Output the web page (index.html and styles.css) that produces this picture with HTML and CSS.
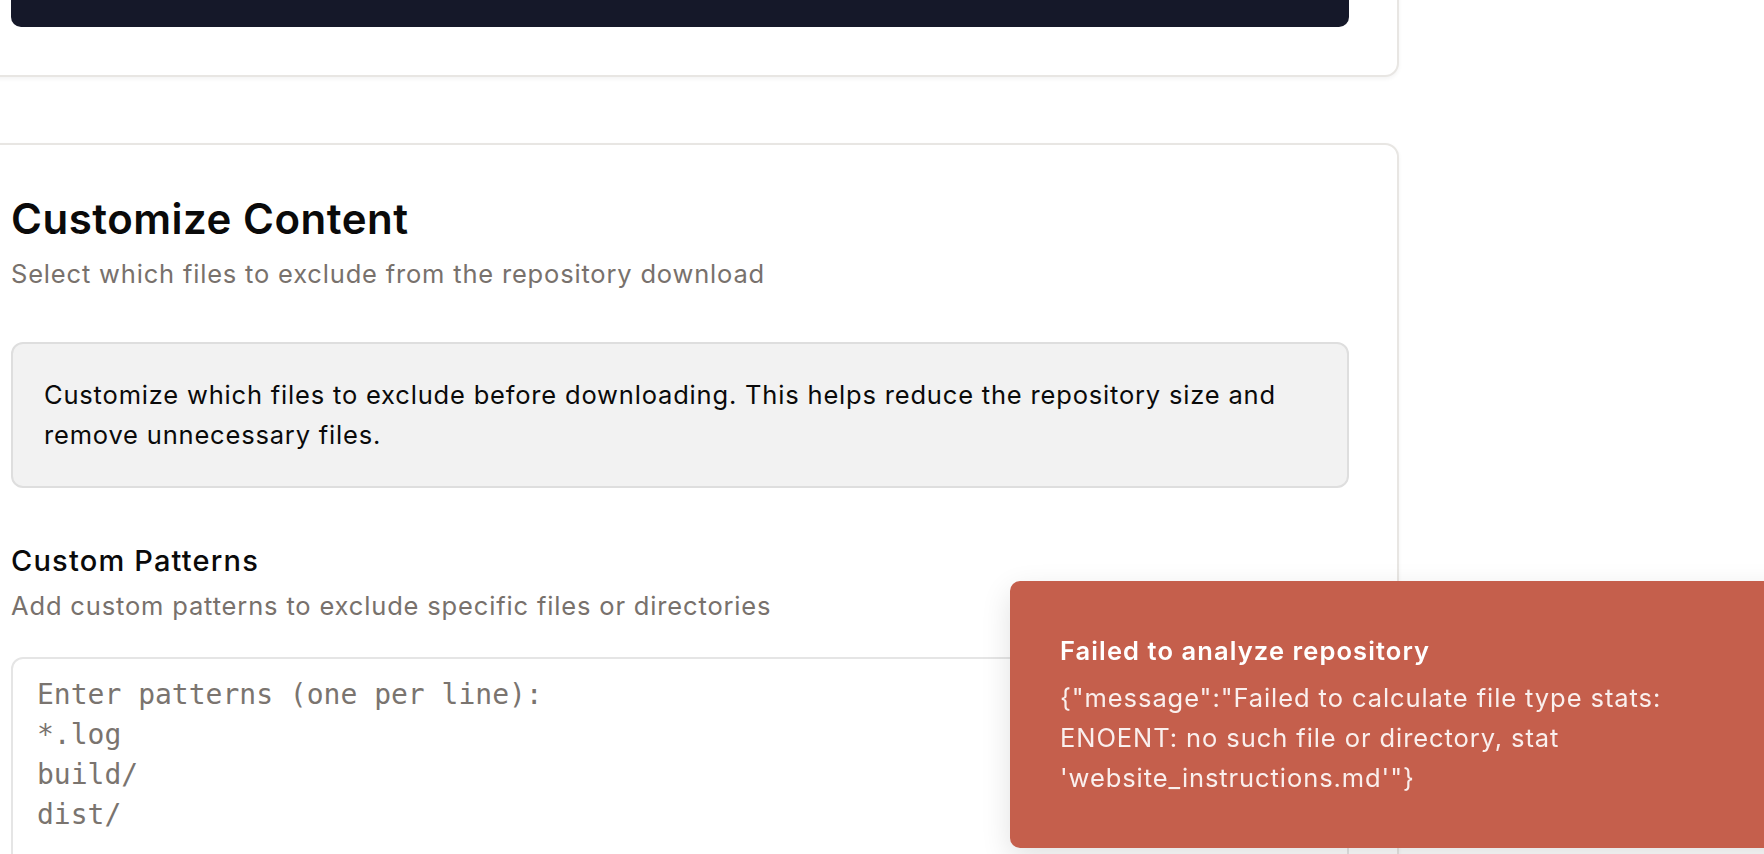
FILE: index.html
```html
<!DOCTYPE html>
<html lang="en">
<head>
<meta charset="utf-8">
<title>Customize Content</title>
<link rel="stylesheet" href="styles.css">
</head>
<body>
<main class="page">
  <section class="card card-top">
    <button class="btn-dark" type="button" aria-label="Download"></button>
  </section>

  <section class="card card-main">
    <h2 class="card-title">Customize Content</h2>
    <p class="card-desc">Select which files to exclude from the repository download</p>

    <div class="info-box">
      <p>Customize which files to exclude before downloading. This helps reduce the repository size and remove unnecessary files.</p>
    </div>

    <div class="patterns">
      <h3 class="patterns-title">Custom Patterns</h3>
      <p class="patterns-desc">Add custom patterns to exclude specific files or directories</p>
      <textarea class="patterns-input" placeholder="Enter patterns (one per line):&#10;*.log&#10;build/&#10;dist/"></textarea>
    </div>
  </section>
</main>

<div class="toast" role="alert">
  <div class="toast-title">Failed to analyze repository</div>
  <div class="toast-body">{"message":"Failed to calculate file type stats: ENOENT: no such file or directory, stat 'website_instructions.md'"}</div>
</div>
</body>
</html>
```

FILE: styles.css
```css
* { box-sizing: border-box; }

html, body {
  margin: 0;
  padding: 0;
  background: #ffffff;
  overflow: hidden;
  height: 100%;
}

body {
  font-family: Inter, "Noto Sans", "Liberation Sans", sans-serif;
  color: #0a0a0a;
}

.page {
  display: flex;
  flex-direction: column;
  gap: 66px;
  width: 1438px;
  margin: -120px 0 0 -39px;
}

.card {
  background: #ffffff;
  border: 2px solid #e8e6e3;
  border-radius: 14px;
  box-shadow: 0 2px 4px rgba(0, 0, 0, 0.05);
}

.card-top {
  padding: 24px 48px 48px;
}

.btn-dark {
  display: block;
  width: 100%;
  height: 121px;
  border: 0;
  border-radius: 10px;
  background: #151829;
}

.card-main {
  padding: 53px 48px 48px;
}

.card-title {
  margin: 0;
  font-size: 42px;
  line-height: 42px;
  font-weight: 600;
  letter-spacing: 0.012em;
  color: #0a0a0a;
}

.card-desc {
  margin: 16px 0 0;
  font-size: 25.5px;
  line-height: 35px;
  letter-spacing: 0.032em;
  color: #78716c;
}

.info-box {
  margin-top: 51px;
  padding: 31px;
  background: #f2f2f2;
  border: 2px solid #dedede;
  border-radius: 12px;
}

.info-box p {
  margin: 0;
  font-size: 25.5px;
  line-height: 40px;
  letter-spacing: 0.032em;
  color: #0a0a0a;
}

.patterns {
  margin-top: 59px;
}

.patterns-title {
  margin: 0;
  font-size: 29px;
  line-height: 28px;
  font-weight: 500;
  letter-spacing: 0.041em;
  color: #0a0a0a;
}

.patterns-desc {
  margin: 13px 0 0;
  font-size: 25.5px;
  line-height: 35px;
  letter-spacing: 0.033em;
  color: #78716c;
}

.patterns-input {
  display: block;
  width: 100%;
  height: 320px;
  margin-top: 34px;
  padding: 16px 24px;
  border: 2px solid #e5e5e5;
  border-radius: 12px;
  background: #ffffff;
  font-family: "DejaVu Sans Mono", "Liberation Mono", monospace;
  font-size: 28px;
  line-height: 40px;
  color: #0a0a0a;
  resize: none;
  outline: none;
}

.patterns-input::placeholder {
  color: #7a746f;
  opacity: 1;
}

.toast {
  position: fixed;
  left: 1010px;
  top: 581px;
  width: 820px;
  height: 267px;
  padding: 52px 50px;
  background: #c55f4c;
  border-radius: 10px;
  box-shadow: 0 10px 30px rgba(0, 0, 0, 0.12);
  color: #ffffff;
}

.toast-title {
  font-size: 25.5px;
  line-height: 35px;
  font-weight: 600;
  letter-spacing: 0.043em;
}

.toast-body {
  margin-top: 10px;
  max-width: 650px;
  font-size: 25.5px;
  line-height: 40px;
  letter-spacing: 0.036em;
  color: rgba(255, 255, 255, 0.9);
}
```
